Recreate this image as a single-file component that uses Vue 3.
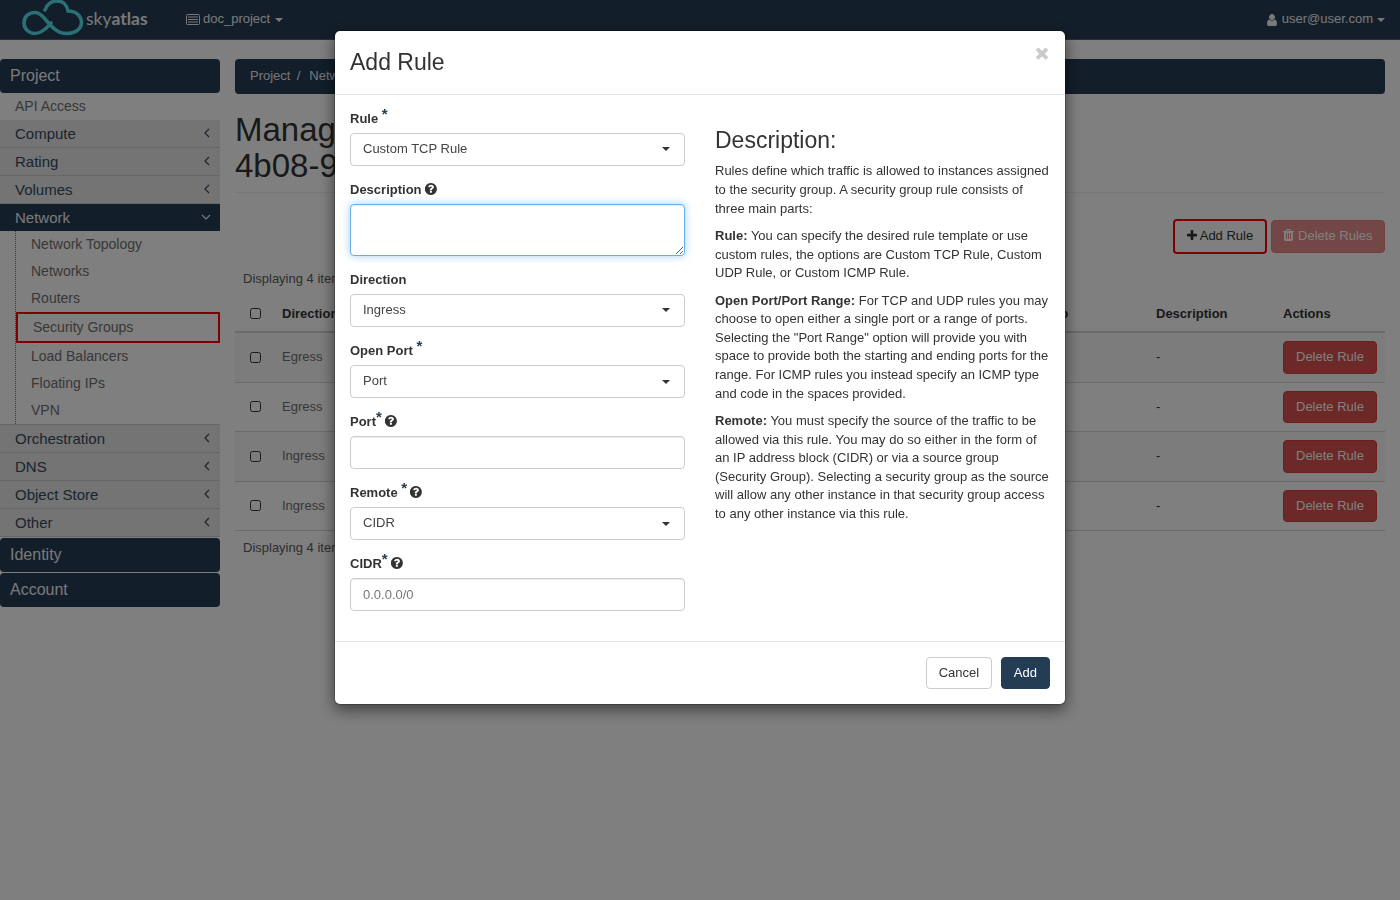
<template>
  <div class="page">
    <header class="topbar">
      <div class="brand">
        <svg class="logo" viewBox="20 0 66 40" width="66" height="40" fill="none" stroke="#55e0ea" stroke-width="3.6" stroke-linecap="round">
          <path d="M66 34.500C57 34.500 51 27 46 21C42 16 38 13.500 35 13.500C28 13.500 24 18 24 24C24 30 29 34.500 35 34.500C42 34.500 47 29 51 24" />
          <path d="M45 11C47 5 52 2 57 2C63 2 67 6 68 12C76 12 81.500 17 81.500 23.500C81.500 30 75 34.500 66 34.500" />
        </svg>
        <span class="wordmark">sky<b>atlas</b></span>
      </div>
      <div class="project-pick">
        <svg class="list-icon" viewBox="0 0 14 11" width="14" height="11">
          <rect x="0.500" y="0.500" width="13" height="10" rx="1" fill="none" stroke="currentColor" />
          <path d="M2 3h10M2 5.500h10M2 8h10" stroke="currentColor" />
        </svg>
        <span>doc_project</span>
        <i class="caret"></i>
      </div>
      <div class="user-menu">
        <svg viewBox="0 0 1280 1792" width="10" height="14" fill="currentColor">
          <path d="M1280 1399q0 109-62.500 187t-150.500 78h-854q-88 0-150.500-78t-62.500-187q0-85 8.500-160.500t31.500-152 58.500-131 94-89 134.500-34.500q131 128 313 128t313-128q76 0 134.500 34.500t94 89 58.500 131 31.500 152 8.500 160.500zm-256-887q0 159-112.500 271.500t-271.500 112.500-271.500-112.500-112.500-271.500 112.500-271.500 271.500-112.500 271.500 112.500 112.500 271.500z" />
        </svg>
        <span>user@user.com</span>
        <i class="caret"></i>
      </div>
    </header>

    <div class="layout">
      <aside class="sidebar">
        <div class="dash">Project</div>
        <a class="plain">API Access</a>
        <template v-for="g in groupsTop" :key="g">
          <div class="group">{{ g }}<svg class="chev" viewBox="0 0 6 10" width="6" height="10"><path d="M5 1L1 5l4 4" /></svg></div>
        </template>
        <div class="group open">Network<svg class="chev down" viewBox="0 0 10 6" width="10" height="6"><path d="M1 1l4 4 4-4" /></svg></div>
        <div class="submenu">
          <a v-for="item in networkItems" :key="item" :class="{ active: item === 'Security Groups' }">{{ item }}</a>
        </div>
        <div class="group-sep"></div>
        <template v-for="g in groupsBottom" :key="g">
          <div class="group">{{ g }}<svg class="chev" viewBox="0 0 6 10" width="6" height="10"><path d="M5 1L1 5l4 4" /></svg></div>
        </template>
        <div class="dash identity">Identity</div>
        <div class="dash account">Account</div>
      </aside>

      <main class="content">
        <nav class="crumbs"><span>Project&nbsp;&thinsp;/</span><span>Network&nbsp;/</span><span>Security Groups</span></nav>
        <h1 class="title">Manage Security Group Rules: default (1b2c3d4e-5f60-<br />4b08-9a7c-3e21d5f0b6a4)</h1>

        <div class="actions">
          <button class="btn add-rule">
            <svg viewBox="0 0 1408 1792" width="10" height="13" fill="currentColor">
              <path d="M1408 736v192q0 40-28 68t-68 28h-416v416q0 40-28 68t-68 28h-192q-40 0-68-28t-28-68v-416h-416q-40 0-68-28t-28-68v-192q0-40 28-68t68-28h416v-416q0-40 28-68t68-28h192q40 0 68 28t28 68v416h416q40 0 68 28t28 68z" />
            </svg>
            Add Rule
          </button>
          <button class="btn danger faded">
            <svg viewBox="0 0 1408 1792" width="11" height="14" fill="currentColor">
              <path d="M512 1248v-704q0-14-9-23t-23-9h-64q-14 0-23 9t-9 23v704q0 14 9 23t23 9h64q14 0 23-9t9-23zm256 0v-704q0-14-9-23t-23-9h-64q-14 0-23 9t-9 23v704q0 14 9 23t23 9h64q14 0 23-9t9-23zm256 0v-704q0-14-9-23t-23-9h-64q-14 0-23 9t-9 23v704q0 14 9 23t23 9h64q14 0 23-9t9-23zm-544-992h448l-48-117q-7-9-17-11h-317q-10 2-17 11zm928 32v64q0 14-9 23t-23 9h-96v948q0 83-47 143.500t-113 60.500h-832q-66 0-113-58.500t-47-141.500v-952h-96q-14 0-23-9t-9-23v-64q0-14 9-23t23-9h309l70-167q15-37 54-63t79-26h320q40 0 79 26t54 63l70 167h309q14 0 23 9t9 23z" />
            </svg>
            Delete Rules
          </button>
        </div>

        <div class="count top">Displaying 4 items</div>
        <table class="rules">
          <colgroup>
            <col v-for="(w, i) in colWidths" :key="i" :style="{ width: w + 'px' }" />
          </colgroup>
          <thead>
            <tr>
              <th><span class="check"></span></th>
              <th v-for="h in headers" :key="h">{{ h }}</th>
            </tr>
          </thead>
          <tbody>
            <tr v-for="(r, i) in rules" :key="i">
              <td><span class="check"></span></td>
              <td>{{ r.direction }}</td>
              <td>IPv4</td>
              <td>Any</td>
              <td>Any</td>
              <td>0.0.0.0/0</td>
              <td>-</td>
              <td class="dash-cell">-</td>
              <td><button class="btn danger">Delete Rule</button></td>
            </tr>
          </tbody>
        </table>
        <div class="count">Displaying 4 items</div>
      </main>
    </div>

    <div class="backdrop">
      <div class="modal">
        <div class="modal-head">
          <h3>Add Rule</h3>
          <svg class="close" viewBox="0 0 1408 1792" width="14" height="18" fill="currentColor">
            <path d="M1298 1322q0 40-28 68l-136 136q-28 28-68 28t-68-28l-294-294-294 294q-28 28-68 28t-68-28l-136-136q-28-28-28-68t28-68l294-294-294-294q-28-28-28-68t28-68l136-136q28-28 68-28t68 28l294 294 294-294q28-28 68-28t68 28l136 136q28 28 28 68t-28 68l-294 294 294 294q28 28 28 68z" />
          </svg>
        </div>
        <div class="modal-body">
          <form class="fields" @submit.prevent>
            <div v-for="f in fields" :key="f.label" class="field">
              <label>
                {{ f.label }}<template v-if="f.gap">&nbsp;</template><sup v-if="f.required">*</sup>
                <svg v-if="f.help" class="help" viewBox="0 0 1536 1792" width="12" height="14" fill="currentColor">
                  <path d="M880 1328v-192q0-14-9-23t-23-9h-192q-14 0-23 9t-9 23v192q0 14 9 23t23 9h192q14 0 23-9t9-23zm256-672q0-88-55.500-163t-138.500-116-170-41q-243 0-371 213-15 24 8 42l132 100q7 6 19 6 16 0 25-12 53-68 86-92 34-24 86-24 48 0 85.500 26t37.500 59q0 38-20 61t-68 45q-63 28-115.500 86.500t-52.500 125.500v36q0 14 9 23t23 9h192q14 0 23-9t9-23q0-19 21.500-49.500t54.500-49.500q32-18 49-28.500t46-35 44.500-48 28-60.500 12.500-81zm384 240q0 209-103 385.500t-279.500 279.500-385.500 103-385.500-103-279.500-279.500-103-385.500 103-385.500 279.500-279.500 385.500-103 385.500 103 279.500 279.500 103 385.500z" />
                </svg>
              </label>
              <div v-if="f.kind === 'select'" class="select">
                <span>{{ f.value }}</span>
                <i class="caret"></i>
              </div>
              <textarea v-else-if="f.kind === 'area'" class="area"></textarea>
              <input v-else class="text" type="text" :placeholder="f.placeholder" />
            </div>
          </form>
          <div class="help-text">
            <h3>Description:</h3>
            <p>Rules define which traffic is allowed to instances assigned to the security group. A security group rule consists of three main parts:</p>
            <p><strong>Rule:</strong> You can specify the desired rule template or use custom rules, the options are Custom TCP Rule, Custom UDP Rule, or Custom ICMP Rule.</p>
            <p><strong>Open Port/Port Range:</strong> For TCP and UDP rules you may choose to open either a single port or a range of ports. Selecting the "Port Range" option will provide you with space to provide both the starting and ending ports for the range. For ICMP rules you instead specify an ICMP type and code in the spaces provided.</p>
            <p><strong>Remote:</strong> You must specify the source of the traffic to be allowed via this rule. You may do so either in the form of an IP address block (CIDR) or via a source group (Security Group). Selecting a security group as the source will allow any other instance in that security group access to any other instance via this rule.</p>
          </div>
        </div>
        <div class="modal-foot">
          <button class="btn cancel">Cancel</button>
          <button class="btn primary">Add</button>
        </div>
      </div>
    </div>
  </div>
</template>

<script setup>
const groupsTop = ['Compute', 'Rating', 'Volumes']
const groupsBottom = ['Orchestration', 'DNS', 'Object Store', 'Other']
const networkItems = ['Network Topology', 'Networks', 'Routers', 'Security Groups', 'Load Balancers', 'Floating IPs', 'VPN']

const colWidths = [39, 110, 110, 120, 130, 171, 233, 127, 110]
const headers = ['Direction', 'Ether Type', 'IP Protocol', 'Port Range', 'Remote IP Prefix', 'Remote Security Group', 'Description', 'Actions']
const rules = [
  { direction: 'Egress' },
  { direction: 'Egress' },
  { direction: 'Ingress' },
  { direction: 'Ingress' }
]

const fields = [
  { label: 'Rule', gap: true, required: true, kind: 'select', value: 'Custom TCP Rule' },
  { label: 'Description', help: true, kind: 'area' },
  { label: 'Direction', kind: 'select', value: 'Ingress' },
  { label: 'Open Port', gap: true, required: true, kind: 'select', value: 'Port' },
  { label: 'Port', required: true, help: true, kind: 'text' },
  { label: 'Remote', gap: true, required: true, help: true, kind: 'select', value: 'CIDR' },
  { label: 'CIDR', required: true, help: true, kind: 'text', placeholder: '0.0.0.0/0' }
]
</script>

<style>
html, body {
  margin: 0;
  background: #fff;
}
</style>

<style scoped>
.page {
  min-height: 100vh;
  font-family: "Liberation Sans", Arial, sans-serif;
  font-size: 13px;
  line-height: 18.57px;
  color: #5c5c5c;
}
.topbar {
  height: 40px;
  box-sizing: border-box;
  border-bottom: 1px solid #4a5c70;
  background: #243c54;
  color: #f2f2f2;
  display: flex;
  align-items: center;
}
.brand {
  width: 186px;
  height: 40px;
  display: flex;
  align-items: flex-start;
  padding-left: 20px;
  box-sizing: border-box;
  flex-shrink: 0;
}
.logo {
  flex-shrink: 0;
  margin-top: -1px;
}
.wordmark {
  font-family: Lato, sans-serif;
  font-size: 17.500px;
  line-height: 37px;
  color: #f0f0f0;
}
.wordmark b {
  font-weight: 700;
}
.project-pick {
  display: flex;
  align-items: center;
  gap: 3px;
}
.project-pick .caret {
  margin-left: 2px;
}
.user-menu {
  margin-left: auto;
  margin-right: 15px;
  display: flex;
  align-items: center;
  gap: 4px;
}
.user-menu svg {
  margin-right: 1px;
}
.caret {
  display: inline-block;
  width: 0;
  height: 0;
  border-left: 4px solid transparent;
  border-right: 4px solid transparent;
  border-top: 4px solid currentColor;
}
.layout {
  display: flex;
  padding-top: 19px;
  padding-right: 15px;
}
.sidebar {
  width: 220px;
  flex-shrink: 0;
  margin-right: 15px;
}
.dash {
  height: 34px;
  line-height: 33px;
  padding-left: 10px;
  font-size: 16px;
  color: #f2f2f2;
  background: #243c54;
  border-radius: 4px;
}
.dash.identity {
  margin-top: 1px;
  margin-bottom: 1px;
}
.plain {
  display: block;
  height: 27px;
  line-height: 26px;
  padding-left: 15px;
  font-size: 14px;
  color: #707070;
}
.group {
  height: 28px;
  box-sizing: border-box;
  line-height: 27px;
  padding-left: 15px;
  font-size: 15px;
  color: #354a60;
  background: #e8e8e8;
  border-bottom: 1px solid #ccc;
  position: relative;
}
.group.open {
  height: 27px;
  line-height: 27px;
  color: #f2f2f2;
  background: #243c54;
  border-bottom: 0;
}
.group-sep {
  height: 1px;
  background: #ccc;
}
.chev {
  position: absolute;
  right: 10px;
  top: 8px;
  fill: none;
  stroke: #354a60;
  stroke-width: 1.2;
}
.chev.down {
  right: 9px;
  top: 10px;
  stroke: #f2f2f2;
}
.submenu {
  margin-left: 15px;
  border-left: 1px dotted #777;
}
.submenu a {
  display: block;
  height: 27px;
  line-height: 26px;
  padding-left: 15px;
  font-size: 14px;
  color: #707070;
}
.submenu a.active {
  height: 31px;
  box-sizing: border-box;
  line-height: 26px;
  padding-left: 15px;
  border: 2px solid #f00;
}
.content {
  flex: 1;
  min-width: 0;
}
.crumbs {
  height: 35px;
  line-height: 33px;
  padding-left: 15px;
  background: #243c54;
  border-radius: 4px;
  color: #eee;
  display: flex;
  gap: 9px;
  white-space: nowrap;
}
.title {
  margin: 18px 0 0;
  padding-bottom: 9px;
  border-bottom: 1px solid #eee;
  font-size: 33px;
  line-height: 35.500px;
  font-weight: 400;
  color: #333;
}
.actions {
  display: flex;
  justify-content: flex-end;
  align-items: center;
  gap: 4px;
  margin-top: 26px;
  height: 35px;
}
.btn {
  font-family: inherit;
  font-size: 13px;
  line-height: 18.57px;
  height: 32.500px;
  padding: 0 12px;
  box-sizing: border-box;
  border-radius: 4px;
  border: 1px solid transparent;
}
.add-rule {
  height: 35px;
  width: 94px;
  padding: 0;
  background: #fff;
  color: #333;
  border: 2px solid #f00;
}
.danger {
  background: #d9534f;
  border-color: #d43f3a;
  color: #fff;
}
.faded {
  opacity: .65;
  height: 33px;
  width: 114px;
  padding: 0;
}
.btn svg {
  vertical-align: -2px;
}
.faded svg {
  vertical-align: -3px;
}
.count {
  padding-left: 8px;
  height: 18.570px;
}
.count.top {
  margin-top: 16px;
}
.rules {
  width: 1150px;
  table-layout: fixed;
  border-collapse: collapse;
  margin-top: 8px;
  margin-bottom: 8px;
}
.rules th {
  text-align: left;
  padding: 8px;
  white-space: nowrap;
  color: #333;
  border-bottom: 2px solid #d4d4d4;
}
.rules td {
  padding: 8px;
  color: #6e6e6e;
  border-bottom: 1px solid #d4d4d4;
  white-space: nowrap;
  vertical-align: middle;
}
.rules td.dash-cell {
  color: #333;
}
.rules tbody tr:nth-child(odd) {
  background: #f9f9f9;
}
.rules .btn {
  display: block;
}
.check {
  display: block;
  width: 11px;
  height: 11px;
  box-sizing: border-box;
  margin-left: 7px;
  border: 1.500px solid #333;
  border-radius: 2.500px;
}
.backdrop {
  position: fixed;
  inset: 0;
  background: rgba(0, 0, 0, .5);
}
.modal {
  width: 732px;
  box-sizing: border-box;
  margin: 30px auto 0;
  background: #fff;
  background-clip: padding-box;
  border: 1px solid rgba(0, 0, 0, .2);
  border-radius: 6px;
  box-shadow: 0 5px 15px rgba(0, 0, 0, .5);
  color: #333;
}
.modal-head {
  display: flex;
  align-items: center;
  justify-content: space-between;
  padding: 15px;
  border-bottom: 1px solid #e5e5e5;
}
.modal-head h3 {
  margin: 0;
  font-size: 23px;
  line-height: 32.500px;
  font-weight: 400;
}
.close {
  color: #cbcbcb;
  margin-top: -18px;
  margin-right: 1px;
}
.modal-body {
  padding: 15px;
  display: grid;
  grid-template-columns: 335px 335px;
  column-gap: 30px;
}
.field {
  margin-bottom: 15px;
}
.field label {
  display: block;
  height: 18.570px;
  margin-bottom: 5px;
  font-weight: 700;
  white-space: nowrap;
}
.field sup {
  font-size: 15px;
  line-height: 0;
  vertical-align: 4px;
  color: #243c54;
}
.help {
  vertical-align: -2px;
  margin-left: 3px;
}
.select,
.text,
.area {
  display: block;
  width: 100%;
  box-sizing: border-box;
  border: 1px solid #ccc;
  border-radius: 4px;
  background: #fff;
  font-family: inherit;
  font-size: 13px;
  color: #444;
  box-shadow: inset 0 1px 1px rgba(0, 0, 0, .075);
}
.select {
  height: 32.500px;
  padding: 0 14.500px 0 12px;
  display: flex;
  align-items: center;
  justify-content: space-between;
  box-shadow: none;
}
.select .caret {
  color: #333;
}
.text {
  height: 32.500px;
  padding: 6px 12px;
  outline: none;
}
.text::placeholder {
  color: #777;
  opacity: 1;
}
.area {
  height: 51.500px;
  padding: 6px 12px;
  border-color: #66afe9;
  outline: none;
  box-shadow: inset 0 1px 1px rgba(0, 0, 0, .075), 0 0 8px rgba(102, 175, 233, .6);
}
.help-text h3 {
  margin: 17.500px 0 9px;
  font-size: 23px;
  line-height: 26.400px;
  font-weight: 400;
}
.help-text p {
  margin: 0 0 9px;
}
.modal-foot {
  display: flex;
  justify-content: flex-end;
  gap: 9px;
  margin-top: 0;
  padding: 15px;
  border-top: 1px solid #e5e5e5;
}
.cancel {
  width: 66px;
  padding: 0;
  background: #fff;
  border-color: #ccc;
  color: #333;
}
.primary {
  background: #243c54;
  border-color: #243c54;
  color: #fff;
}
</style>
